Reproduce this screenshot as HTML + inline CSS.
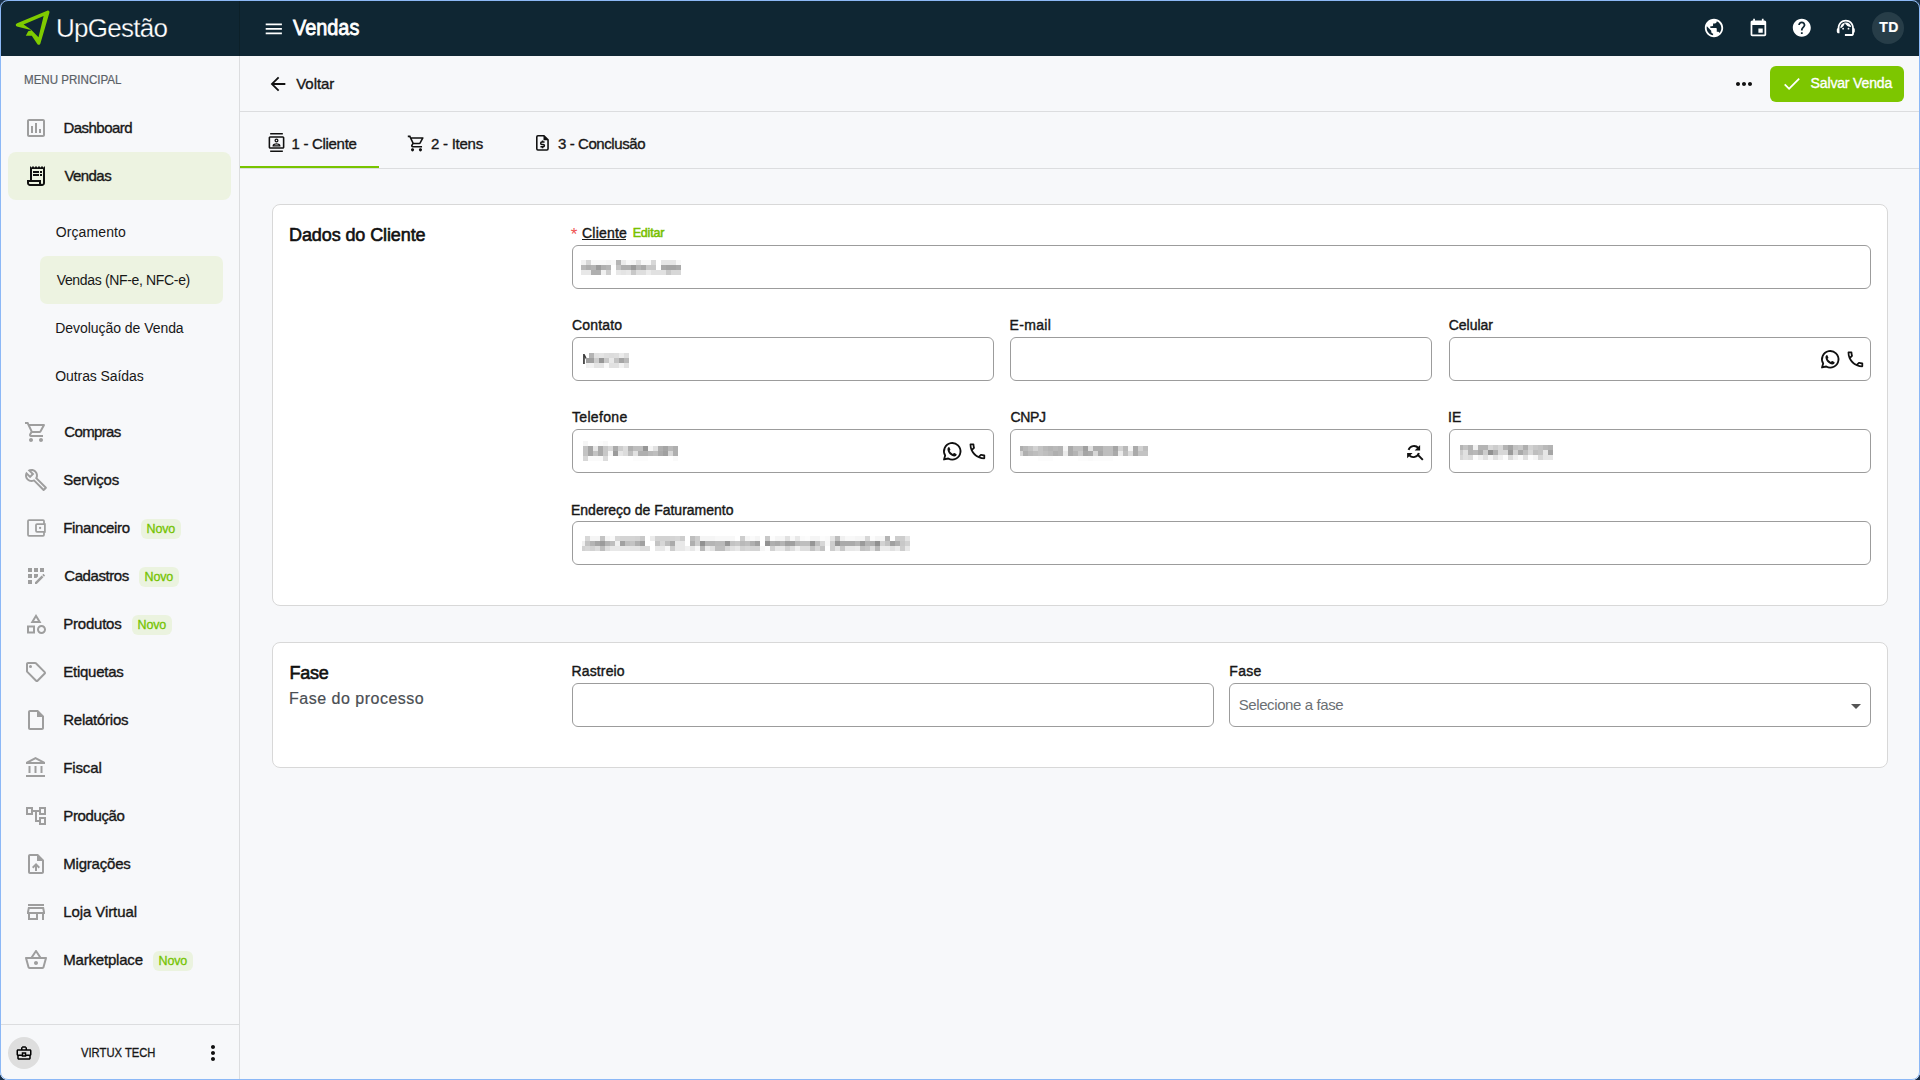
<!DOCTYPE html>
<html><head><meta charset="utf-8"><title>UpGestão - Vendas</title>
<style>
html,body{margin:0;padding:0;width:1920px;height:1080px;overflow:hidden;background:#18304a;}
#frame{position:absolute;left:0;top:0;width:1920px;height:1080px;border-radius:8px;overflow:hidden;background:#f7f8fa;}
#border{position:absolute;left:0;top:0;width:1918px;height:1078px;border:1px solid #8cb8f6;border-radius:8px;pointer-events:none;z-index:10}
.a{position:absolute;}
.t{position:absolute;white-space:nowrap;font-family:"Liberation Sans",sans-serif;}
.card{background:#fff;border:1px solid #d8d8d8;border-radius:8px;box-sizing:border-box;}
.inp{background:#fff;border:1px solid #9c9c9c;border-radius:6px;box-sizing:border-box;}
</style></head><body>
<div id="frame">
<div class="a" id="hdr" style="left:0;top:0;width:1920px;height:56px;background:#0f2633"></div>
<svg class="a" style="left:0;top:0" width="60" height="56" viewBox="0 0 60 56"><path fill-rule="evenodd" fill="#7fcb00" d="M16.9 26.5 C15.3 25.7 15.4 23.9 17.1 23.3 L47.2 10.7 C48.7 10.1 49.8 11.2 49.4 12.7 L40.4 43.6 C40 45.1 38.1 45.3 37.3 44 L31.8 35.8 L25.8 35.8 L28.2 31.3 L30.8 30.1 Z M23.6 24.4 L43.6 16 L38.5 37.2 L30.9 29.5 Z"/><path d="M25.2 31.1 L31.2 30.1" stroke="#0f2633" stroke-width="0.7"/></svg>
<div class="t" style="left:56.1px;top:14.60px;font-size:26px;line-height:26px;color:#ffffff;font-weight:normal;letter-spacing:-0.76px;-webkit-text-stroke:0.25px #0f2633;">UpGestão</div>
<div class="a" style="left:239px;top:0;width:1px;height:56px;background:#0c2029"></div>
<svg class="a" style="left:263.3px;top:17.6px" width="21.6" height="21.6" viewBox="0 0 24 24" fill="#fff"><path d="M3 18h18v-2H3v2zm0-5h18v-2H3v2zm0-7v2h18V6H3z"/></svg>
<div class="t" style="left:292.5px;top:18.12px;font-size:21.5px;line-height:21.5px;color:#ffffff;font-weight:normal;letter-spacing:0px;-webkit-text-stroke:0.8px #fff;transform:scaleX(0.925);transform-origin:0 0;">Vendas</div>
<svg class="a" style="left:1703px;top:17px" width="22" height="22" viewBox="0 0 24 24" fill="#fff"><path d="M12 2C6.48 2 2 6.48 2 12s4.48 10 10 10 10-4.48 10-10S17.52 2 12 2zm-1 17.93c-3.95-.49-7-3.85-7-7.93 0-.62.08-1.21.21-1.79L9 15v1c0 1.1.9 2 2 2v1.930zm6.9-2.54c-.26-.81-1-1.39-1.9-1.39h-1v-3c0-.55-.45-1-1-1H8v-2h2c.55 0 1-.45 1-1V7h2c1.1 0 2-.9 2-2v-.41c2.93 1.19 5 4.06 5 7.41 0 2.08-.8 3.97-2.1 5.39z"/></svg>
<svg class="a" style="left:1747.6px;top:18.2px" width="20.8" height="20.8" viewBox="0 0 24 24" fill="#fff"><path d="M17 12h-5v5h5v-5zM16 1v2H8V1H6v2H5c-1.11 0-1.99.9-1.99 2L3 19c0 1.1.89 2 2 2h14c1.1 0 2-.9 2-2V5c0-1.1-.9-2-2-2h-1V1h-2zm3 18H5V8h14v11z"/></svg>
<svg class="a" style="left:1791.3px;top:17.2px" width="21.6" height="21.6" viewBox="0 0 24 24" fill="#fff"><path d="M12 2C6.48 2 2 6.48 2 12s4.48 10 10 10 10-4.48 10-10S17.52 2 12 2zm1 17h-2v-2h2v2zm2.07-7.75l-.9.92C13.45 12.9 13 13.5 13 15h-2v-.5c0-1.1.45-2.1 1.17-2.830l1.24-1.26c.37-.36.59-.86.59-1.41 0-1.1-.9-2-2-2s-2 .9-2 2H8c0-2.21 1.79-4 4-4s4 1.79 4 4c0 .88-.36 1.68-.93 2.25z"/></svg>
<svg class="a" style="left:1835.2px;top:17.2px" width="21.6" height="21.6" viewBox="0 0 24 24" fill="#fff"><path d="M21 12.22C21 6.73 16.74 3 12 3c-4.690 0-9 3.65-9 9.28-.6.34-1 .98-1 1.72v2c0 1.1.9 2 2 2h1v-6.1c0-3.87 3.13-7 7-7s7 3.13 7 7V19h-8v2h8c1.1 0 2-.9 2-2v-1.22c.59-.31 1-.92 1-1.62v-2.3c0-.7-.41-1.31-1-1.64z"/><circle cx="9" cy="13" r="1"/><circle cx="15" cy="13" r="1"/><path d="M18 11.03C17.52 8.18 15.04 6 12.05 6c-3.03 0-6.29 2.51-6.03 6.45 2.47-1.01 4.33-3.21 4.86-5.89 1.31 2.63 4 4.44 7.12 4.47z"/></svg>
<div class="a" style="left:1872px;top:12px;width:32px;height:32px;border-radius:50%;background:#273d48"></div>
<div class="t" style="left:1879.2px;top:20.30px;font-size:14px;line-height:14px;color:#ffffff;font-weight:bold;letter-spacing:0.4px;-webkit-text-stroke:0.2px #fff;">TD</div>
<div class="a" style="left:0;top:56px;width:239px;height:1024px;background:#f7f8fa"></div>
<div class="a" style="left:239px;top:56px;width:1px;height:1024px;background:#dcdddf"></div>
<div class="t" style="left:24.0px;top:73.58px;font-size:12.5px;line-height:12.5px;color:#5a6066;font-weight:normal;letter-spacing:0px;-webkit-text-stroke:0.2px #5a6066;transform:scaleX(0.925);transform-origin:0 0;">MENU PRINCIPAL</div>
<div class="a" style="left:8px;top:152px;width:223px;height:48px;border-radius:8px;background:#edf3e1"></div>
<div class="a" style="left:40px;top:256px;width:183px;height:48px;border-radius:7px;background:#edf3e1"></div>
<svg class="a" style="left:24px;top:116px" width="24" height="24" viewBox="0 0 24 24" fill="#9e9e9e" color="#9e9e9e"><path d="M9 17H7v-7h2v7zm4 0h-2V7h2v10zm4 0h-2v-4h2v4zm2 2H5V5h14v14zm0-16H5c-1.1 0-2 .9-2 2v14c0 1.1.9 2 2 2h14c1.1 0 2-.9 2-2V5c0-1.1-.9-2-2-2z"/></svg>
<div class="t" style="left:63.4px;top:120.25px;font-size:15px;line-height:15px;color:#171717;font-weight:normal;letter-spacing:-0.52px;-webkit-text-stroke:0.35px #171717;">Dashboard</div>
<svg class="a" style="left:24px;top:164px" width="24" height="24" viewBox="0 0 24 24" fill="#111" color="#111"><path d="M19.5 3.5 18 2l-1.5 1.5L15 2l-1.5 1.5L12 2l-1.5 1.5L9 2 7.5 3.5 6 2v14H3v3c0 1.66 1.34 3 3 3h12c1.66 0 3-1.34 3-3V2l-1.5 1.5zM15 20H6c-.55 0-1-.45-1-1v-1h10v2zm4-1c0 .55-.45 1-1 1s-1-.45-1-1v-3H8V5h11v14z"/><path d="M9 7h6v2H9zM16 7h2v2h-2zM9 10h6v2H9zM16 10h2v2h-2z"/></svg>
<div class="t" style="left:64.4px;top:168.25px;font-size:15px;line-height:15px;color:#171717;font-weight:normal;letter-spacing:-0.56px;-webkit-text-stroke:0.35px #171717;">Vendas</div>
<svg class="a" style="left:24px;top:420px" width="24" height="24" viewBox="0 0 24 24" fill="#9e9e9e" color="#9e9e9e"><path d="M15.55 13c.75 0 1.41-.41 1.75-1.03l3.58-6.49c.37-.66-.11-1.48-.87-1.48H5.21l-.94-2H1v2h2l3.6 7.59-1.35 2.44C4.52 15.37 5.48 17 7 17h12v-2H7l1.1-2h7.45zM6.16 6h12.15l-2.76 5H8.53L6.16 6zM7 18c-1.1 0-1.99.9-1.99 2S5.9 22 7 22s2-.9 2-2-.9-2-2-2zm10 0c-1.1 0-1.99.9-1.99 2s.89 2 1.99 2 2-.9 2-2-.9-2-2-2z"/></svg>
<div class="t" style="left:64.3px;top:424.25px;font-size:15px;line-height:15px;color:#171717;font-weight:normal;letter-spacing:-0.65px;-webkit-text-stroke:0.35px #171717;">Compras</div>
<svg class="a" style="left:24px;top:468px" width="24" height="24" viewBox="0 0 24 24" fill="#9e9e9e" color="#9e9e9e"><path d="M22.61 18.99l-9.08-9.08c.93-2.34.45-5.1-1.44-7C9.79.61 6.21.4 3.66 2.26L7.5 6.11 6.08 7.52 2.25 3.69C.39 6.23.6 9.82 2.9 12.11c1.86 1.86 4.57 2.35 6.89 1.48l9.11 9.11c.39.39 1.02.39 1.41 0l2.3-2.3c.4-.38.4-1.01 0-1.41zm-3 1.6l-9.46-9.46c-.61.45-1.29.72-2 .82-1.36.2-2.79-.21-3.83-1.25C3.37 9.76 2.93 8.5 3 7.26l3.09 3.09 4.24-4.24-3.09-3.09c1.24-.07 2.49.37 3.44 1.31 1.08 1.08 1.49 2.57 1.24 3.96-.12.71-.42 1.37-.88 1.96l9.45 9.45-.88.89z"/></svg>
<div class="t" style="left:63.3px;top:472.25px;font-size:15px;line-height:15px;color:#171717;font-weight:normal;letter-spacing:-0.24px;-webkit-text-stroke:0.35px #171717;">Serviços</div>
<svg class="a" style="left:24px;top:516px" width="24" height="24" viewBox="0 0 24 24" fill="#9e9e9e" color="#9e9e9e"><g fill="none" stroke="currentColor" stroke-width="1.75"><path d="M20 8V5a1 1 0 0 0-1-1H5a1 1 0 0 0-1 1v13.8a1 1 0 0 0 1 1h14a1 1 0 0 0 1-1v-3"/><path d="M20.9 8H13a1 1 0 0 0-1 1v5.8a1 1 0 0 0 1 1h7.9z"/></g><circle cx="16.1" cy="12" r="1.15"/></svg>
<div class="t" style="left:63.3px;top:520.25px;font-size:15px;line-height:15px;color:#171717;font-weight:normal;letter-spacing:-0.37px;-webkit-text-stroke:0.35px #171717;">Financeiro</div>
<div class="a" style="left:141px;top:519px;width:40px;height:20px;border-radius:6px;background:#ebf3df"></div>
<div class="t" style="left:146.6px;top:523.38px;font-size:12.5px;line-height:12.5px;color:#74c300;font-weight:normal;letter-spacing:-0.15px;-webkit-text-stroke:0.3px #74c300;">Novo</div>
<svg class="a" style="left:24px;top:564px" width="24" height="24" viewBox="0 0 24 24" fill="#9e9e9e" color="#9e9e9e"><path d="M10 4h4v4h-4zM4 16h4v4H4zM4 10h4v4H4zM4 4h4v4H4zM14 12.42V10h-4v4h2.42zM20.88 11.29l-1.17-1.17c-.16-.16-.42-.16-.58 0l-.88.88L20 12.75l.88-.88c.16-.16.16-.42 0-.58zM11 18.25V20h1.75l6.67-6.67-1.75-1.75zM16 4h4v4h-4z"/></svg>
<div class="t" style="left:64.3px;top:568.25px;font-size:15px;line-height:15px;color:#171717;font-weight:normal;letter-spacing:-0.44px;-webkit-text-stroke:0.35px #171717;">Cadastros</div>
<div class="a" style="left:139px;top:567px;width:40px;height:20px;border-radius:6px;background:#ebf3df"></div>
<div class="t" style="left:144.6px;top:571.38px;font-size:12.5px;line-height:12.5px;color:#74c300;font-weight:normal;letter-spacing:-0.15px;-webkit-text-stroke:0.3px #74c300;">Novo</div>
<svg class="a" style="left:24px;top:612px" width="24" height="24" viewBox="0 0 24 24" fill="#9e9e9e" color="#9e9e9e"><path d="M12 2l-5.5 9h11L12 2zm0 3.84L13.93 9h-3.87L12 5.84zM17.5 13c-2.49 0-4.5 2.01-4.5 4.5s2.01 4.5 4.5 4.5 4.5-2.01 4.5-4.5-2.01-4.5-4.5-4.5zm0 7c-1.38 0-2.5-1.12-2.5-2.5s1.12-2.5 2.5-2.5 2.5 1.12 2.5 2.5-1.12 2.5-2.5 2.5zM3 21.5h8v-8H3v8zm2-6h4v4H5v-4z"/></svg>
<div class="t" style="left:63.3px;top:616.25px;font-size:15px;line-height:15px;color:#171717;font-weight:normal;letter-spacing:-0.23px;-webkit-text-stroke:0.35px #171717;">Produtos</div>
<div class="a" style="left:132px;top:615px;width:40px;height:20px;border-radius:6px;background:#ebf3df"></div>
<div class="t" style="left:137.6px;top:619.38px;font-size:12.5px;line-height:12.5px;color:#74c300;font-weight:normal;letter-spacing:-0.15px;-webkit-text-stroke:0.3px #74c300;">Novo</div>
<svg class="a" style="left:24px;top:660px" width="24" height="24" viewBox="0 0 24 24" fill="#9e9e9e" color="#9e9e9e"><path d="M21.41 11.41l-8.83-8.83c-.37-.37-.88-.58-1.41-.58H4c-1.1 0-2 .9-2 2v7.17c0 .53.21 1.04.59 1.41l8.83 8.83c.78.78 2.05.78 2.83 0l7.17-7.17c.78-.78.78-2.04-.01-2.83zM12.83 20L4 11.17V4h7.17L20 12.83 12.83 20z"/><circle cx="6.5" cy="6.5" r="1.5"/></svg>
<div class="t" style="left:63.3px;top:664.25px;font-size:15px;line-height:15px;color:#171717;font-weight:normal;letter-spacing:-0.26px;-webkit-text-stroke:0.35px #171717;">Etiquetas</div>
<svg class="a" style="left:24px;top:708px" width="24" height="24" viewBox="0 0 24 24" fill="#9e9e9e" color="#9e9e9e"><path d="M14 2H6c-1.1 0-1.99.9-1.99 2L4 20c0 1.1.89 2 1.99 2H18c1.1 0 2-.9 2-2V8l-6-6zM6 20V4h7v5h5v11H6z"/></svg>
<div class="t" style="left:63.3px;top:712.25px;font-size:15px;line-height:15px;color:#171717;font-weight:normal;letter-spacing:-0.26px;-webkit-text-stroke:0.35px #171717;">Relatórios</div>
<svg class="a" style="left:24px;top:756px" width="24" height="24" viewBox="0 0 24 24" fill="#9e9e9e" color="#9e9e9e"><path d="M6.5 10h-2v7h2v-7zm6 0h-2v7h2v-7zm8.5 9H2v2h19v-2zm-2.5-9h-2v7h2v-7zm-7-6.74L16.71 6H6.29l5.21-2.74m0-2.26L2 6v2h19V6l-9.5-5z"/></svg>
<div class="t" style="left:63.3px;top:760.25px;font-size:15px;line-height:15px;color:#171717;font-weight:normal;letter-spacing:-0.14px;-webkit-text-stroke:0.35px #171717;">Fiscal</div>
<svg class="a" style="left:24px;top:804px" width="24" height="24" viewBox="0 0 24 24" fill="#9e9e9e" color="#9e9e9e"><path d="M22 11V3h-7v3H9V3H2v8h7V8h2v10h4v3h7v-8h-7v3h-2V8h2v3h7zM7 9H4V5h3v4zm10 6h3v4h-3v-4zm0-10h3v4h-3V5z"/></svg>
<div class="t" style="left:63.3px;top:808.25px;font-size:15px;line-height:15px;color:#171717;font-weight:normal;letter-spacing:-0.37px;-webkit-text-stroke:0.35px #171717;">Produção</div>
<svg class="a" style="left:24px;top:852px" width="24" height="24" viewBox="0 0 24 24" fill="#9e9e9e" color="#9e9e9e"><path d="M14 2H6c-1.1 0-1.99.9-1.99 2L4 20c0 1.1.89 2 1.99 2H18c1.1 0 2-.9 2-2V8l-6-6zm4 18H6V4h7v5h5v11zM8 15.01l1.41 1.41L11 14.84V19h2v-4.16l1.59 1.59L16 15.01 12.01 11 8 15.01z"/></svg>
<div class="t" style="left:63.3px;top:856.25px;font-size:15px;line-height:15px;color:#171717;font-weight:normal;letter-spacing:-0.21px;-webkit-text-stroke:0.35px #171717;">Migrações</div>
<svg class="a" style="left:24px;top:900px" width="24" height="24" viewBox="0 0 24 24" fill="#9e9e9e" color="#9e9e9e"><path d="M18.36 9l.6 3H5.04l.6-3h12.72M20 4H4v2h16V4zm0 3H4l-1 5v2h1v6h10v-6h4v6h2v-6h1v-2l-1-5zM6 18v-4h6v4H6z"/></svg>
<div class="t" style="left:63.3px;top:904.25px;font-size:15px;line-height:15px;color:#171717;font-weight:normal;letter-spacing:-0.1px;-webkit-text-stroke:0.35px #171717;">Loja Virtual</div>
<svg class="a" style="left:24px;top:948px" width="24" height="24" viewBox="0 0 24 24" fill="#9e9e9e" color="#9e9e9e"><path d="M22 9h-4.79l-4.38-6.56c-.19-.28-.51-.42-.83-.42s-.64.14-.83.43L6.79 9H2c-.55 0-1 .45-1 1 0 .09.01.18.04.27l2.54 9.27c.23.84 1 1.46 1.92 1.46h13c.92 0 1.69-.62 1.93-1.46l2.54-9.27L23 10c0-.55-.45-1-1-1zM12 4.8L14.8 9H9.2L12 4.8zM18.5 19l-12.99.01L3.31 11H20.7l-2.2 8zM12 13c-1.1 0-2 .9-2 2s.9 2 2 2 2-.9 2-2-.9-2-2-2z"/></svg>
<div class="t" style="left:63.3px;top:952.25px;font-size:15px;line-height:15px;color:#171717;font-weight:normal;letter-spacing:-0.2px;-webkit-text-stroke:0.35px #171717;">Marketplace</div>
<div class="a" style="left:153px;top:951px;width:40px;height:20px;border-radius:6px;background:#ebf3df"></div>
<div class="t" style="left:158.6px;top:955.38px;font-size:12.5px;line-height:12.5px;color:#74c300;font-weight:normal;letter-spacing:-0.15px;-webkit-text-stroke:0.3px #74c300;">Novo</div>
<div class="t" style="left:55.7px;top:225.10px;font-size:14px;line-height:14px;color:#171717;font-weight:normal;letter-spacing:0.11px;">Orçamento</div>
<div class="t" style="left:56.7px;top:273.10px;font-size:14px;line-height:14px;color:#171717;font-weight:normal;letter-spacing:-0.34px;">Vendas (NF-e, NFC-e)</div>
<div class="t" style="left:55.3px;top:321.10px;font-size:14px;line-height:14px;color:#171717;font-weight:normal;letter-spacing:-0.05px;">Devolução de Venda</div>
<div class="t" style="left:55.3px;top:369.10px;font-size:14px;line-height:14px;color:#171717;font-weight:normal;letter-spacing:-0.09px;">Outras Saídas</div>
<div class="a" style="left:1px;top:1024px;width:238px;height:1px;background:#dcdddf"></div>
<div class="a" style="left:8px;top:1037px;width:32px;height:32px;border-radius:50%;background:#dedede"></div>
<svg class="a" style="left:15px;top:1044px" width="18" height="18" viewBox="0 0 24 24" fill="#000"><path d="M20 7h-4V5l-2-2h-4L8 5v2H4c-1.1 0-2 .9-2 2v5c0 .75.4 1.38 1 1.73V19c0 1.11.89 2 2 2h14c1.11 0 2-.89 2-2v-3.28c.59-.35 1-.99 1-1.72V9c0-1.1-.9-2-2-2zM10 5h4v2h-4V5zM4 9h16v5h-5v-3H9v3H4V9zm9 6h-2v-2h2v2zm6 4H5v-3h4v1h6v-1h4v3z"/></svg>
<div class="t" style="left:80.8px;top:1046.25px;font-size:13px;line-height:13px;color:#171717;font-weight:normal;letter-spacing:0px;-webkit-text-stroke:0.3px #171717;transform:scaleX(0.864);transform-origin:0 0;">VIRTUX TECH</div>
<svg class="a" style="left:201px;top:1041px" width="24" height="24" viewBox="0 0 24 24" fill="#111"><path d="M12 8c1.1 0 2-.9 2-2s-.9-2-2-2-2 .9-2 2 .9 2 2 2zm0 2c-1.1 0-2 .9-2 2s.9 2 2 2 2-.9 2-2-.9-2-2-2zm0 6c-1.1 0-2 .9-2 2s.9 2 2 2 2-.9 2-2-.9-2-2-2z"/></svg>
<div class="a" style="left:240px;top:56px;width:1680px;height:1024px;background:#f7f8fa"></div>
<svg class="a" style="left:267px;top:73px" width="22" height="22" viewBox="0 0 24 24" fill="#111"><path d="M20 11H7.830l5.59-5.59L12 4l-8 8 8 8 1.41-1.41L7.83 13H20v-2z"/></svg>
<div class="t" style="left:296.2px;top:76.15px;font-size:15px;line-height:15px;color:#171717;font-weight:normal;letter-spacing:-0.04px;-webkit-text-stroke:0.35px #171717;">Voltar</div>
<svg class="a" style="left:1732px;top:72px" width="24" height="24" viewBox="0 0 24 24" fill="#111"><path d="M6 10c-1.1 0-2 .9-2 2s.9 2 2 2 2-.9 2-2-.9-2-2-2zm12 0c-1.1 0-2 .9-2 2s.9 2 2 2 2-.9 2-2-.9-2-2-2zm-6 0c-1.1 0-2 .9-2 2s.9 2 2 2 2-.9 2-2-.9-2-2-2z"/></svg>
<div class="a" style="left:1770px;top:66px;width:134px;height:36px;border-radius:6px;background:#7dc600"></div>
<svg class="a" style="left:1781.3px;top:72.6px" width="21.5" height="21.5" viewBox="0 0 24 24" fill="#fff"><path d="M9 16.17L4.83 12l-1.42 1.41L9 19 21 7l-1.41-1.41z"/></svg>
<div class="t" style="left:1810.6px;top:76.30px;font-size:14px;line-height:14px;color:#fff;font-weight:normal;letter-spacing:-0.15px;-webkit-text-stroke:0.35px #fff;">Salvar Venda</div>
<div class="a" style="left:240px;top:111px;width:1680px;height:1px;background:#dcdddf"></div>
<div class="a" style="left:240px;top:168px;width:1680px;height:1px;background:#dcdddf"></div>
<div class="a" style="left:240px;top:166px;width:139px;height:2px;background:#78c400"></div>
<svg class="a" style="left:266.5px;top:133.3px" width="19" height="19" viewBox="0 0 24 24" fill="#111"><path d="M20 0H4v2h16V0zM4 24h16v-2H4v2zM20 4H4c-1.1 0-2 .9-2 2v12c0 1.1.9 2 2 2h16c1.1 0 2-.9 2-2V6c0-1.1-.9-2-2-2zm0 14H4V6h16v12zm-8-6c1.38 0 2.5-1.12 2.5-2.5S13.38 7 12 7 9.5 8.12 9.5 9.5 10.62 12 12 12zm0-3.5c.55 0 1 .45 1 1s-.45 1-1 1-1-.45-1-1 .45-1 1-1zm5 7.49C17 13.9 13.69 13 12 13s-5 .9-5 2.99V17h10v-1.01zm-8.19-.49c.61-.52 2.03-1 3.19-1 1.17 0 2.59.48 3.2 1H8.81z"/></svg>
<div class="t" style="left:291.5px;top:135.65px;font-size:15px;line-height:15px;color:#171717;font-weight:normal;letter-spacing:-0.3px;-webkit-text-stroke:0.35px #171717;">1 - Cliente</div>
<svg class="a" style="left:406.6px;top:134.3px" width="19" height="19" viewBox="0 0 24 24" fill="#111"><path d="M15.55 13c.75 0 1.41-.41 1.75-1.03l3.58-6.49c.37-.66-.11-1.48-.87-1.48H5.21l-.94-2H1v2h2l3.6 7.59-1.35 2.44C4.52 15.37 5.48 17 7 17h12v-2H7l1.1-2h7.45zM6.16 6h12.15l-2.76 5H8.53L6.16 6zM7 18c-1.1 0-1.99.9-1.99 2S5.9 22 7 22s2-.9 2-2-.9-2-2-2zm10 0c-1.1 0-1.99.9-1.99 2s.89 2 1.99 2 2-.9 2-2-.9-2-2-2z"/></svg>
<div class="t" style="left:431.0px;top:135.65px;font-size:15px;line-height:15px;color:#171717;font-weight:normal;letter-spacing:-0.25px;-webkit-text-stroke:0.35px #171717;">2 - Itens</div>
<svg class="a" style="left:532.5px;top:133.3px" width="19" height="19" viewBox="0 0 24 24" fill="#111" color="#111"><path d="M6.2 3.5h7.6l5.2 5.2v11.3c0 .8-.6 1.4-1.4 1.4H6.2c-.8 0-1.4-.6-1.4-1.4V4.9c0-.8.6-1.4 1.4-1.4z" fill="none" stroke="currentColor" stroke-width="2"/><path d="M13.3 3.3v5.9h5.9z"/><path d="M14.6 11.4h-3.4c-.8 0-1.5.6-1.5 1.5s.7 1.5 1.5 1.5h1.7c.8 0 1.5.7 1.5 1.5s-.7 1.5-1.5 1.5H9.4" fill="none" stroke="currentColor" stroke-width="1.9"/><path d="M11.1 9.6h1.9v1.8h-1.9zM11.1 17.4h1.9v1.8h-1.9z"/></svg>
<div class="t" style="left:558.0px;top:135.65px;font-size:15px;line-height:15px;color:#171717;font-weight:normal;letter-spacing:-0.42px;-webkit-text-stroke:0.35px #171717;">3 - Conclusão</div>
<div class="a card" style="left:272px;top:204px;width:1616px;height:402px"></div>
<div class="t" style="left:289.0px;top:225.70px;font-size:18px;line-height:18px;color:#111;font-weight:normal;letter-spacing:-0.1px;-webkit-text-stroke:0.6px #111;">Dados do Cliente</div>
<div class="t" style="left:570.8px;top:226.35px;font-size:17px;line-height:17px;color:#ef5350;font-weight:normal;letter-spacing:0px;">*</div>
<div class="t" style="left:582.0px;top:226.30px;font-size:14px;line-height:14px;color:#171717;font-weight:normal;letter-spacing:0.22px;-webkit-text-stroke:0.4px #171717;">Cliente</div>
<div class="a" style="left:582px;top:239px;width:43.5px;height:1.3px;background:#171717"></div>
<div class="t" style="left:632.7px;top:227.38px;font-size:12.5px;line-height:12.5px;color:#78c000;font-weight:normal;letter-spacing:-0.2px;-webkit-text-stroke:0.55px #78c000;">Editar</div>
<div class="a inp" style="left:572px;top:245px;width:1299px;height:44px"></div>
<svg class="a" style="left:581px;top:260px" width="100" height="15" shape-rendering="crispEdges"><rect x="0" y="0" width="5" height="5" fill="rgb(242,242,242)"/><rect x="5" y="0" width="5" height="5" fill="rgb(215,215,215)"/><rect x="10" y="0" width="5" height="5" fill="rgb(248,248,248)"/><rect x="15" y="0" width="5" height="5" fill="rgb(248,248,248)"/><rect x="20" y="0" width="5" height="5" fill="rgb(248,248,248)"/><rect x="25" y="0" width="5" height="5" fill="rgb(245,245,245)"/><rect x="30" y="0" width="5" height="5" fill="rgb(248,248,248)"/><rect x="35" y="0" width="5" height="5" fill="rgb(180,180,180)"/><rect x="40" y="0" width="5" height="5" fill="rgb(235,235,235)"/><rect x="45" y="0" width="5" height="5" fill="rgb(248,248,248)"/><rect x="50" y="0" width="5" height="5" fill="rgb(245,245,245)"/><rect x="55" y="0" width="5" height="5" fill="rgb(225,225,225)"/><rect x="60" y="0" width="5" height="5" fill="rgb(248,248,248)"/><rect x="65" y="0" width="5" height="5" fill="rgb(248,248,248)"/><rect x="70" y="0" width="5" height="5" fill="rgb(215,215,215)"/><rect x="80" y="0" width="5" height="5" fill="rgb(230,230,230)"/><rect x="85" y="0" width="5" height="5" fill="rgb(230,230,230)"/><rect x="90" y="0" width="5" height="5" fill="rgb(230,230,230)"/><rect x="95" y="0" width="5" height="5" fill="rgb(248,248,248)"/><rect x="0" y="5" width="5" height="5" fill="rgb(185,185,185)"/><rect x="5" y="5" width="5" height="5" fill="rgb(175,175,175)"/><rect x="10" y="5" width="5" height="5" fill="rgb(180,180,180)"/><rect x="15" y="5" width="5" height="5" fill="rgb(155,155,155)"/><rect x="20" y="5" width="5" height="5" fill="rgb(175,175,175)"/><rect x="25" y="5" width="5" height="5" fill="rgb(180,180,180)"/><rect x="35" y="5" width="5" height="5" fill="rgb(195,195,195)"/><rect x="40" y="5" width="5" height="5" fill="rgb(175,175,175)"/><rect x="45" y="5" width="5" height="5" fill="rgb(175,175,175)"/><rect x="50" y="5" width="5" height="5" fill="rgb(155,155,155)"/><rect x="55" y="5" width="5" height="5" fill="rgb(180,180,180)"/><rect x="60" y="5" width="5" height="5" fill="rgb(170,170,170)"/><rect x="65" y="5" width="5" height="5" fill="rgb(200,200,200)"/><rect x="70" y="5" width="5" height="5" fill="rgb(200,200,200)"/><rect x="80" y="5" width="5" height="5" fill="rgb(170,170,170)"/><rect x="85" y="5" width="5" height="5" fill="rgb(165,165,165)"/><rect x="90" y="5" width="5" height="5" fill="rgb(165,165,165)"/><rect x="95" y="5" width="5" height="5" fill="rgb(170,170,170)"/><rect x="0" y="10" width="5" height="5" fill="rgb(232,232,232)"/><rect x="5" y="10" width="5" height="5" fill="rgb(232,232,232)"/><rect x="10" y="10" width="5" height="5" fill="rgb(175,175,175)"/><rect x="15" y="10" width="5" height="5" fill="rgb(175,175,175)"/><rect x="20" y="10" width="5" height="5" fill="rgb(240,240,240)"/><rect x="25" y="10" width="5" height="5" fill="rgb(205,205,205)"/><rect x="35" y="10" width="5" height="5" fill="rgb(232,232,232)"/><rect x="40" y="10" width="5" height="5" fill="rgb(228,228,228)"/><rect x="45" y="10" width="5" height="5" fill="rgb(232,232,232)"/><rect x="50" y="10" width="5" height="5" fill="rgb(200,200,200)"/><rect x="55" y="10" width="5" height="5" fill="rgb(222,222,222)"/><rect x="60" y="10" width="5" height="5" fill="rgb(222,222,222)"/><rect x="65" y="10" width="5" height="5" fill="rgb(235,235,235)"/><rect x="70" y="10" width="5" height="5" fill="rgb(225,225,225)"/><rect x="75" y="10" width="5" height="5" fill="rgb(225,225,225)"/><rect x="80" y="10" width="5" height="5" fill="rgb(225,225,225)"/><rect x="85" y="10" width="5" height="5" fill="rgb(200,200,200)"/><rect x="90" y="10" width="5" height="5" fill="rgb(215,215,215)"/><rect x="95" y="10" width="5" height="5" fill="rgb(215,215,215)"/></svg>
<div class="t" style="left:572.0px;top:318.30px;font-size:14px;line-height:14px;color:#171717;font-weight:normal;letter-spacing:0.17px;-webkit-text-stroke:0.4px #171717;">Contato</div>
<div class="a inp" style="left:572px;top:337px;width:422px;height:44px"></div>
<div class="t" style="left:1009.5px;top:318.30px;font-size:14px;line-height:14px;color:#171717;font-weight:normal;letter-spacing:0.35px;-webkit-text-stroke:0.4px #171717;">E-mail</div>
<div class="a inp" style="left:1010px;top:337px;width:422px;height:44px"></div>
<div class="t" style="left:1448.8px;top:318.30px;font-size:14px;line-height:14px;color:#171717;font-weight:normal;letter-spacing:-0.04px;-webkit-text-stroke:0.4px #171717;">Celular</div>
<div class="a inp" style="left:1449px;top:337px;width:422px;height:44px"></div>
<div class="t" style="left:572.0px;top:410.30px;font-size:14px;line-height:14px;color:#171717;font-weight:normal;letter-spacing:0.32px;-webkit-text-stroke:0.4px #171717;">Telefone</div>
<div class="a inp" style="left:572px;top:429px;width:422px;height:44px"></div>
<div class="t" style="left:1010.5px;top:410.30px;font-size:14px;line-height:14px;color:#171717;font-weight:normal;letter-spacing:-0.33px;-webkit-text-stroke:0.4px #171717;">CNPJ</div>
<div class="a inp" style="left:1010px;top:429px;width:422px;height:44px"></div>
<div class="t" style="left:1448.0px;top:410.30px;font-size:14px;line-height:14px;color:#171717;font-weight:normal;letter-spacing:0px;-webkit-text-stroke:0.4px #171717;">IE</div>
<div class="a inp" style="left:1449px;top:429px;width:422px;height:44px"></div>
<div class="t" style="left:571.0px;top:502.70px;font-size:14px;line-height:14px;color:#171717;font-weight:normal;letter-spacing:-0.01px;-webkit-text-stroke:0.4px #171717;">Endereço de Faturamento</div>
<div class="a inp" style="left:572px;top:521px;width:1299px;height:44px"></div>
<svg class="a" style="left:580px;top:350px" width="10" height="18"><path d="M3.1 4h1.7v10H3.1z M3.4 4 L4.6 4 L6.8 8.6 L5.8 9.2 Z" fill="#3a3a3a"/></svg>
<svg class="a" style="left:586px;top:353px" width="43" height="15" shape-rendering="crispEdges"><rect x="3" y="0" width="5" height="5" fill="rgb(180,180,180)"/><rect x="8" y="0" width="5" height="5" fill="rgb(225,225,225)"/><rect x="13" y="0" width="5" height="5" fill="rgb(228,228,228)"/><rect x="18" y="0" width="5" height="5" fill="rgb(222,222,222)"/><rect x="23" y="0" width="5" height="5" fill="rgb(220,220,220)"/><rect x="28" y="0" width="5" height="5" fill="rgb(222,222,222)"/><rect x="33" y="0" width="5" height="5" fill="rgb(235,235,235)"/><rect x="38" y="0" width="5" height="5" fill="rgb(222,222,222)"/><rect x="0" y="5" width="3" height="5" fill="rgb(160,160,160)"/><rect x="3" y="5" width="5" height="5" fill="rgb(160,160,160)"/><rect x="8" y="5" width="5" height="5" fill="rgb(205,205,205)"/><rect x="13" y="5" width="5" height="5" fill="rgb(150,150,150)"/><rect x="18" y="5" width="5" height="5" fill="rgb(200,200,200)"/><rect x="23" y="5" width="5" height="5" fill="rgb(232,232,232)"/><rect x="28" y="5" width="5" height="5" fill="rgb(195,195,195)"/><rect x="33" y="5" width="5" height="5" fill="rgb(165,165,165)"/><rect x="38" y="5" width="5" height="5" fill="rgb(185,185,185)"/><rect x="0" y="10" width="3" height="5" fill="rgb(240,240,240)"/><rect x="3" y="10" width="5" height="5" fill="rgb(242,242,242)"/><rect x="8" y="10" width="5" height="5" fill="rgb(228,228,228)"/><rect x="13" y="10" width="5" height="5" fill="rgb(228,228,228)"/><rect x="18" y="10" width="5" height="5" fill="rgb(248,248,248)"/><rect x="23" y="10" width="5" height="5" fill="rgb(225,225,225)"/><rect x="28" y="10" width="5" height="5" fill="rgb(225,225,225)"/><rect x="33" y="10" width="5" height="5" fill="rgb(242,242,242)"/><rect x="38" y="10" width="5" height="5" fill="rgb(225,225,225)"/></svg>
<svg class="a" style="left:583px;top:441px" width="95" height="20" shape-rendering="crispEdges"><rect x="0" y="0" width="5" height="5" fill="rgb(245,245,245)"/><rect x="15" y="0" width="5" height="5" fill="rgb(252,252,252)"/><rect x="20" y="0" width="5" height="5" fill="rgb(248,248,248)"/><rect x="0" y="5" width="5" height="5" fill="rgb(195,195,195)"/><rect x="5" y="5" width="5" height="5" fill="rgb(165,165,165)"/><rect x="10" y="5" width="5" height="5" fill="rgb(230,230,230)"/><rect x="15" y="5" width="5" height="5" fill="rgb(170,170,170)"/><rect x="20" y="5" width="5" height="5" fill="rgb(200,200,200)"/><rect x="25" y="5" width="5" height="5" fill="rgb(215,215,215)"/><rect x="30" y="5" width="5" height="5" fill="rgb(170,170,170)"/><rect x="35" y="5" width="5" height="5" fill="rgb(205,205,205)"/><rect x="40" y="5" width="5" height="5" fill="rgb(220,220,220)"/><rect x="45" y="5" width="5" height="5" fill="rgb(175,175,175)"/><rect x="50" y="5" width="5" height="5" fill="rgb(190,190,190)"/><rect x="55" y="5" width="5" height="5" fill="rgb(190,190,190)"/><rect x="60" y="5" width="5" height="5" fill="rgb(150,150,150)"/><rect x="65" y="5" width="5" height="5" fill="rgb(245,245,245)"/><rect x="70" y="5" width="5" height="5" fill="rgb(225,225,225)"/><rect x="75" y="5" width="5" height="5" fill="rgb(175,175,175)"/><rect x="80" y="5" width="5" height="5" fill="rgb(165,165,165)"/><rect x="85" y="5" width="5" height="5" fill="rgb(185,185,185)"/><rect x="90" y="5" width="5" height="5" fill="rgb(175,175,175)"/><rect x="0" y="10" width="5" height="5" fill="rgb(195,195,195)"/><rect x="5" y="10" width="5" height="5" fill="rgb(165,165,165)"/><rect x="10" y="10" width="5" height="5" fill="rgb(195,195,195)"/><rect x="15" y="10" width="5" height="5" fill="rgb(170,170,170)"/><rect x="20" y="10" width="5" height="5" fill="rgb(200,200,200)"/><rect x="25" y="10" width="5" height="5" fill="rgb(245,245,245)"/><rect x="30" y="10" width="5" height="5" fill="rgb(155,155,155)"/><rect x="35" y="10" width="5" height="5" fill="rgb(230,230,230)"/><rect x="40" y="10" width="5" height="5" fill="rgb(220,220,220)"/><rect x="45" y="10" width="5" height="5" fill="rgb(190,190,190)"/><rect x="50" y="10" width="5" height="5" fill="rgb(225,225,225)"/><rect x="55" y="10" width="5" height="5" fill="rgb(175,175,175)"/><rect x="60" y="10" width="5" height="5" fill="rgb(175,175,175)"/><rect x="65" y="10" width="5" height="5" fill="rgb(185,185,185)"/><rect x="70" y="10" width="5" height="5" fill="rgb(190,190,190)"/><rect x="75" y="10" width="5" height="5" fill="rgb(170,170,170)"/><rect x="80" y="10" width="5" height="5" fill="rgb(160,160,160)"/><rect x="85" y="10" width="5" height="5" fill="rgb(215,215,215)"/><rect x="90" y="10" width="5" height="5" fill="rgb(175,175,175)"/><rect x="0" y="15" width="5" height="5" fill="rgb(215,215,215)"/><rect x="5" y="15" width="5" height="5" fill="rgb(250,250,250)"/><rect x="10" y="15" width="5" height="5" fill="rgb(250,250,250)"/><rect x="15" y="15" width="5" height="5" fill="rgb(250,250,250)"/><rect x="20" y="15" width="5" height="5" fill="rgb(220,220,220)"/><rect x="50" y="15" width="5" height="5" fill="rgb(252,252,252)"/><rect x="55" y="15" width="5" height="5" fill="rgb(252,252,252)"/><rect x="60" y="15" width="5" height="5" fill="rgb(252,252,252)"/><rect x="90" y="15" width="5" height="5" fill="rgb(250,250,250)"/></svg>
<svg class="a" style="left:1020px;top:446px" width="128" height="15" shape-rendering="crispEdges"><rect x="0" y="0" width="3" height="5" fill="rgb(175,175,175)"/><rect x="3" y="0" width="5" height="5" fill="rgb(185,185,185)"/><rect x="8" y="0" width="5" height="5" fill="rgb(195,195,195)"/><rect x="13" y="0" width="5" height="5" fill="rgb(210,210,210)"/><rect x="18" y="0" width="5" height="5" fill="rgb(195,195,195)"/><rect x="23" y="0" width="5" height="5" fill="rgb(185,185,185)"/><rect x="28" y="0" width="5" height="5" fill="rgb(180,180,180)"/><rect x="33" y="0" width="5" height="5" fill="rgb(185,185,185)"/><rect x="38" y="0" width="5" height="5" fill="rgb(180,180,180)"/><rect x="43" y="0" width="5" height="5" fill="rgb(245,245,245)"/><rect x="48" y="0" width="5" height="5" fill="rgb(170,170,170)"/><rect x="53" y="0" width="5" height="5" fill="rgb(190,190,190)"/><rect x="58" y="0" width="5" height="5" fill="rgb(190,190,190)"/><rect x="63" y="0" width="5" height="5" fill="rgb(160,160,160)"/><rect x="68" y="0" width="5" height="5" fill="rgb(225,225,225)"/><rect x="73" y="0" width="5" height="5" fill="rgb(175,175,175)"/><rect x="78" y="0" width="5" height="5" fill="rgb(175,175,175)"/><rect x="83" y="0" width="5" height="5" fill="rgb(190,190,190)"/><rect x="88" y="0" width="5" height="5" fill="rgb(190,190,190)"/><rect x="93" y="0" width="5" height="5" fill="rgb(165,165,165)"/><rect x="98" y="0" width="5" height="5" fill="rgb(210,210,210)"/><rect x="103" y="0" width="5" height="5" fill="rgb(185,185,185)"/><rect x="108" y="0" width="5" height="5" fill="rgb(245,245,245)"/><rect x="113" y="0" width="5" height="5" fill="rgb(170,170,170)"/><rect x="118" y="0" width="5" height="5" fill="rgb(210,210,210)"/><rect x="123" y="0" width="5" height="5" fill="rgb(190,190,190)"/><rect x="0" y="5" width="3" height="5" fill="rgb(215,215,215)"/><rect x="3" y="5" width="5" height="5" fill="rgb(175,175,175)"/><rect x="8" y="5" width="5" height="5" fill="rgb(185,185,185)"/><rect x="13" y="5" width="5" height="5" fill="rgb(190,190,190)"/><rect x="18" y="5" width="5" height="5" fill="rgb(195,195,195)"/><rect x="23" y="5" width="5" height="5" fill="rgb(190,190,190)"/><rect x="28" y="5" width="5" height="5" fill="rgb(185,185,185)"/><rect x="33" y="5" width="5" height="5" fill="rgb(175,175,175)"/><rect x="38" y="5" width="5" height="5" fill="rgb(180,180,180)"/><rect x="43" y="5" width="5" height="5" fill="rgb(235,235,235)"/><rect x="48" y="5" width="5" height="5" fill="rgb(170,170,170)"/><rect x="53" y="5" width="5" height="5" fill="rgb(180,180,180)"/><rect x="58" y="5" width="5" height="5" fill="rgb(200,200,200)"/><rect x="63" y="5" width="5" height="5" fill="rgb(165,165,165)"/><rect x="68" y="5" width="5" height="5" fill="rgb(170,170,170)"/><rect x="73" y="5" width="5" height="5" fill="rgb(215,215,215)"/><rect x="78" y="5" width="5" height="5" fill="rgb(170,170,170)"/><rect x="83" y="5" width="5" height="5" fill="rgb(190,190,190)"/><rect x="88" y="5" width="5" height="5" fill="rgb(190,190,190)"/><rect x="93" y="5" width="5" height="5" fill="rgb(170,170,170)"/><rect x="98" y="5" width="5" height="5" fill="rgb(235,235,235)"/><rect x="103" y="5" width="5" height="5" fill="rgb(190,190,190)"/><rect x="108" y="5" width="5" height="5" fill="rgb(220,220,220)"/><rect x="113" y="5" width="5" height="5" fill="rgb(170,170,170)"/><rect x="118" y="5" width="5" height="5" fill="rgb(195,195,195)"/><rect x="123" y="5" width="5" height="5" fill="rgb(195,195,195)"/><rect x="18" y="10" width="5" height="5" fill="rgb(252,252,252)"/><rect x="23" y="10" width="5" height="5" fill="rgb(252,252,252)"/><rect x="28" y="10" width="5" height="5" fill="rgb(252,252,252)"/><rect x="58" y="10" width="5" height="5" fill="rgb(252,252,252)"/><rect x="63" y="10" width="5" height="5" fill="rgb(252,252,252)"/><rect x="68" y="10" width="5" height="5" fill="rgb(250,250,250)"/><rect x="73" y="10" width="5" height="5" fill="rgb(252,252,252)"/><rect x="78" y="10" width="5" height="5" fill="rgb(252,252,252)"/><rect x="83" y="10" width="5" height="5" fill="rgb(252,252,252)"/><rect x="88" y="10" width="5" height="5" fill="rgb(252,252,252)"/></svg>
<svg class="a" style="left:1460px;top:445px" width="93" height="15" shape-rendering="crispEdges"><rect x="0" y="0" width="3" height="5" fill="rgb(180,180,180)"/><rect x="3" y="0" width="5" height="5" fill="rgb(195,195,195)"/><rect x="8" y="0" width="5" height="5" fill="rgb(180,180,180)"/><rect x="13" y="0" width="5" height="5" fill="rgb(240,240,240)"/><rect x="18" y="0" width="5" height="5" fill="rgb(180,180,180)"/><rect x="23" y="0" width="5" height="5" fill="rgb(180,180,180)"/><rect x="28" y="0" width="5" height="5" fill="rgb(215,215,215)"/><rect x="33" y="0" width="5" height="5" fill="rgb(205,205,205)"/><rect x="38" y="0" width="5" height="5" fill="rgb(215,215,215)"/><rect x="43" y="0" width="5" height="5" fill="rgb(180,180,180)"/><rect x="48" y="0" width="5" height="5" fill="rgb(165,165,165)"/><rect x="53" y="0" width="5" height="5" fill="rgb(195,195,195)"/><rect x="58" y="0" width="5" height="5" fill="rgb(200,200,200)"/><rect x="63" y="0" width="5" height="5" fill="rgb(175,175,175)"/><rect x="68" y="0" width="5" height="5" fill="rgb(210,210,210)"/><rect x="73" y="0" width="5" height="5" fill="rgb(200,200,200)"/><rect x="78" y="0" width="5" height="5" fill="rgb(195,195,195)"/><rect x="83" y="0" width="5" height="5" fill="rgb(185,185,185)"/><rect x="88" y="0" width="5" height="5" fill="rgb(180,180,180)"/><rect x="0" y="5" width="3" height="5" fill="rgb(205,205,205)"/><rect x="3" y="5" width="5" height="5" fill="rgb(225,225,225)"/><rect x="8" y="5" width="5" height="5" fill="rgb(180,180,180)"/><rect x="13" y="5" width="5" height="5" fill="rgb(185,185,185)"/><rect x="18" y="5" width="5" height="5" fill="rgb(170,170,170)"/><rect x="23" y="5" width="5" height="5" fill="rgb(205,205,205)"/><rect x="28" y="5" width="5" height="5" fill="rgb(145,145,145)"/><rect x="33" y="5" width="5" height="5" fill="rgb(175,175,175)"/><rect x="38" y="5" width="5" height="5" fill="rgb(215,215,215)"/><rect x="43" y="5" width="5" height="5" fill="rgb(215,215,215)"/><rect x="48" y="5" width="5" height="5" fill="rgb(155,155,155)"/><rect x="53" y="5" width="5" height="5" fill="rgb(210,210,210)"/><rect x="58" y="5" width="5" height="5" fill="rgb(170,170,170)"/><rect x="63" y="5" width="5" height="5" fill="rgb(190,190,190)"/><rect x="68" y="5" width="5" height="5" fill="rgb(215,215,215)"/><rect x="73" y="5" width="5" height="5" fill="rgb(190,190,190)"/><rect x="78" y="5" width="5" height="5" fill="rgb(195,195,195)"/><rect x="83" y="5" width="5" height="5" fill="rgb(230,230,230)"/><rect x="88" y="5" width="5" height="5" fill="rgb(165,165,165)"/><rect x="0" y="10" width="3" height="5" fill="rgb(215,215,215)"/><rect x="3" y="10" width="5" height="5" fill="rgb(225,225,225)"/><rect x="8" y="10" width="5" height="5" fill="rgb(220,220,220)"/><rect x="13" y="10" width="5" height="5" fill="rgb(252,252,252)"/><rect x="18" y="10" width="5" height="5" fill="rgb(240,240,240)"/><rect x="23" y="10" width="5" height="5" fill="rgb(225,225,225)"/><rect x="28" y="10" width="5" height="5" fill="rgb(245,245,245)"/><rect x="33" y="10" width="5" height="5" fill="rgb(225,225,225)"/><rect x="38" y="10" width="5" height="5" fill="rgb(240,240,240)"/><rect x="43" y="10" width="5" height="5" fill="rgb(252,252,252)"/><rect x="48" y="10" width="5" height="5" fill="rgb(220,220,220)"/><rect x="53" y="10" width="5" height="5" fill="rgb(240,240,240)"/><rect x="58" y="10" width="5" height="5" fill="rgb(250,250,250)"/><rect x="63" y="10" width="5" height="5" fill="rgb(225,225,225)"/><rect x="68" y="10" width="5" height="5" fill="rgb(252,252,252)"/><rect x="73" y="10" width="5" height="5" fill="rgb(245,245,245)"/><rect x="78" y="10" width="5" height="5" fill="rgb(215,215,215)"/><rect x="83" y="10" width="5" height="5" fill="rgb(230,230,230)"/><rect x="88" y="10" width="5" height="5" fill="rgb(230,230,230)"/></svg>
<svg class="a" style="left:582px;top:536px" width="328" height="15" shape-rendering="crispEdges"><rect x="3" y="0" width="5" height="5" fill="rgb(215,215,215)"/><rect x="8" y="0" width="5" height="5" fill="rgb(245,245,245)"/><rect x="13" y="0" width="5" height="5" fill="rgb(245,245,245)"/><rect x="18" y="0" width="5" height="5" fill="rgb(195,195,195)"/><rect x="23" y="0" width="5" height="5" fill="rgb(245,245,245)"/><rect x="28" y="0" width="5" height="5" fill="rgb(250,250,250)"/><rect x="33" y="0" width="5" height="5" fill="rgb(215,215,215)"/><rect x="38" y="0" width="5" height="5" fill="rgb(212,212,212)"/><rect x="43" y="0" width="5" height="5" fill="rgb(212,212,212)"/><rect x="48" y="0" width="5" height="5" fill="rgb(212,212,212)"/><rect x="53" y="0" width="5" height="5" fill="rgb(210,210,210)"/><rect x="58" y="0" width="5" height="5" fill="rgb(200,200,200)"/><rect x="68" y="0" width="5" height="5" fill="rgb(235,235,235)"/><rect x="73" y="0" width="5" height="5" fill="rgb(210,210,210)"/><rect x="78" y="0" width="5" height="5" fill="rgb(210,210,210)"/><rect x="83" y="0" width="5" height="5" fill="rgb(210,210,210)"/><rect x="88" y="0" width="5" height="5" fill="rgb(212,212,212)"/><rect x="93" y="0" width="5" height="5" fill="rgb(215,215,215)"/><rect x="98" y="0" width="5" height="5" fill="rgb(205,205,205)"/><rect x="108" y="0" width="5" height="5" fill="rgb(190,190,190)"/><rect x="113" y="0" width="5" height="5" fill="rgb(205,205,205)"/><rect x="118" y="0" width="5" height="5" fill="rgb(245,245,245)"/><rect x="123" y="0" width="5" height="5" fill="rgb(245,245,245)"/><rect x="128" y="0" width="5" height="5" fill="rgb(245,245,245)"/><rect x="133" y="0" width="5" height="5" fill="rgb(248,248,248)"/><rect x="138" y="0" width="5" height="5" fill="rgb(248,248,248)"/><rect x="143" y="0" width="5" height="5" fill="rgb(248,248,248)"/><rect x="148" y="0" width="5" height="5" fill="rgb(248,248,248)"/><rect x="158" y="0" width="5" height="5" fill="rgb(205,205,205)"/><rect x="163" y="0" width="5" height="5" fill="rgb(245,245,245)"/><rect x="168" y="0" width="5" height="5" fill="rgb(250,250,250)"/><rect x="173" y="0" width="5" height="5" fill="rgb(245,245,245)"/><rect x="183" y="0" width="5" height="5" fill="rgb(200,200,200)"/><rect x="188" y="0" width="5" height="5" fill="rgb(252,252,252)"/><rect x="193" y="0" width="5" height="5" fill="rgb(245,245,245)"/><rect x="198" y="0" width="5" height="5" fill="rgb(245,245,245)"/><rect x="203" y="0" width="5" height="5" fill="rgb(225,225,225)"/><rect x="208" y="0" width="5" height="5" fill="rgb(248,248,248)"/><rect x="213" y="0" width="5" height="5" fill="rgb(232,232,232)"/><rect x="218" y="0" width="5" height="5" fill="rgb(250,250,250)"/><rect x="223" y="0" width="5" height="5" fill="rgb(252,252,252)"/><rect x="228" y="0" width="5" height="5" fill="rgb(245,245,245)"/><rect x="233" y="0" width="5" height="5" fill="rgb(245,245,245)"/><rect x="238" y="0" width="5" height="5" fill="rgb(252,252,252)"/><rect x="243" y="0" width="5" height="5" fill="rgb(250,250,250)"/><rect x="248" y="0" width="5" height="5" fill="rgb(228,228,228)"/><rect x="253" y="0" width="5" height="5" fill="rgb(190,190,190)"/><rect x="258" y="0" width="5" height="5" fill="rgb(240,240,240)"/><rect x="263" y="0" width="5" height="5" fill="rgb(248,248,248)"/><rect x="268" y="0" width="5" height="5" fill="rgb(248,248,248)"/><rect x="273" y="0" width="5" height="5" fill="rgb(245,245,245)"/><rect x="278" y="0" width="5" height="5" fill="rgb(245,245,245)"/><rect x="283" y="0" width="5" height="5" fill="rgb(215,215,215)"/><rect x="288" y="0" width="5" height="5" fill="rgb(252,252,252)"/><rect x="293" y="0" width="5" height="5" fill="rgb(245,245,245)"/><rect x="298" y="0" width="5" height="5" fill="rgb(245,245,245)"/><rect x="303" y="0" width="5" height="5" fill="rgb(180,180,180)"/><rect x="313" y="0" width="5" height="5" fill="rgb(205,205,205)"/><rect x="318" y="0" width="5" height="5" fill="rgb(205,205,205)"/><rect x="323" y="0" width="5" height="5" fill="rgb(228,228,228)"/><rect x="0" y="5" width="3" height="5" fill="rgb(240,240,240)"/><rect x="3" y="5" width="5" height="5" fill="rgb(195,195,195)"/><rect x="8" y="5" width="5" height="5" fill="rgb(180,180,180)"/><rect x="13" y="5" width="5" height="5" fill="rgb(165,165,165)"/><rect x="18" y="5" width="5" height="5" fill="rgb(155,155,155)"/><rect x="23" y="5" width="5" height="5" fill="rgb(180,180,180)"/><rect x="28" y="5" width="5" height="5" fill="rgb(190,190,190)"/><rect x="33" y="5" width="5" height="5" fill="rgb(240,240,240)"/><rect x="38" y="5" width="5" height="5" fill="rgb(160,160,160)"/><rect x="43" y="5" width="5" height="5" fill="rgb(190,190,190)"/><rect x="48" y="5" width="5" height="5" fill="rgb(195,195,195)"/><rect x="53" y="5" width="5" height="5" fill="rgb(175,175,175)"/><rect x="58" y="5" width="5" height="5" fill="rgb(160,160,160)"/><rect x="73" y="5" width="5" height="5" fill="rgb(195,195,195)"/><rect x="78" y="5" width="5" height="5" fill="rgb(215,215,215)"/><rect x="83" y="5" width="5" height="5" fill="rgb(190,190,190)"/><rect x="88" y="5" width="5" height="5" fill="rgb(170,170,170)"/><rect x="93" y="5" width="5" height="5" fill="rgb(232,232,232)"/><rect x="98" y="5" width="5" height="5" fill="rgb(232,232,232)"/><rect x="108" y="5" width="5" height="5" fill="rgb(175,175,175)"/><rect x="113" y="5" width="5" height="5" fill="rgb(205,205,205)"/><rect x="118" y="5" width="5" height="5" fill="rgb(145,145,145)"/><rect x="123" y="5" width="5" height="5" fill="rgb(180,180,180)"/><rect x="128" y="5" width="5" height="5" fill="rgb(180,180,180)"/><rect x="133" y="5" width="5" height="5" fill="rgb(185,185,185)"/><rect x="138" y="5" width="5" height="5" fill="rgb(185,185,185)"/><rect x="143" y="5" width="5" height="5" fill="rgb(150,150,150)"/><rect x="148" y="5" width="5" height="5" fill="rgb(195,195,195)"/><rect x="153" y="5" width="5" height="5" fill="rgb(200,200,200)"/><rect x="158" y="5" width="5" height="5" fill="rgb(185,185,185)"/><rect x="163" y="5" width="5" height="5" fill="rgb(190,190,190)"/><rect x="168" y="5" width="5" height="5" fill="rgb(175,175,175)"/><rect x="173" y="5" width="5" height="5" fill="rgb(160,160,160)"/><rect x="183" y="5" width="5" height="5" fill="rgb(145,145,145)"/><rect x="188" y="5" width="5" height="5" fill="rgb(175,175,175)"/><rect x="193" y="5" width="5" height="5" fill="rgb(170,170,170)"/><rect x="198" y="5" width="5" height="5" fill="rgb(180,180,180)"/><rect x="203" y="5" width="5" height="5" fill="rgb(160,160,160)"/><rect x="208" y="5" width="5" height="5" fill="rgb(160,160,160)"/><rect x="213" y="5" width="5" height="5" fill="rgb(185,185,185)"/><rect x="218" y="5" width="5" height="5" fill="rgb(190,190,190)"/><rect x="223" y="5" width="5" height="5" fill="rgb(190,190,190)"/><rect x="228" y="5" width="5" height="5" fill="rgb(150,150,150)"/><rect x="233" y="5" width="5" height="5" fill="rgb(190,190,190)"/><rect x="238" y="5" width="5" height="5" fill="rgb(215,215,215)"/><rect x="243" y="5" width="5" height="5" fill="rgb(248,248,248)"/><rect x="248" y="5" width="5" height="5" fill="rgb(205,205,205)"/><rect x="253" y="5" width="5" height="5" fill="rgb(150,150,150)"/><rect x="258" y="5" width="5" height="5" fill="rgb(170,170,170)"/><rect x="263" y="5" width="5" height="5" fill="rgb(170,170,170)"/><rect x="268" y="5" width="5" height="5" fill="rgb(170,170,170)"/><rect x="273" y="5" width="5" height="5" fill="rgb(180,180,180)"/><rect x="278" y="5" width="5" height="5" fill="rgb(155,155,155)"/><rect x="283" y="5" width="5" height="5" fill="rgb(180,180,180)"/><rect x="288" y="5" width="5" height="5" fill="rgb(175,175,175)"/><rect x="293" y="5" width="5" height="5" fill="rgb(145,145,145)"/><rect x="298" y="5" width="5" height="5" fill="rgb(210,210,210)"/><rect x="303" y="5" width="5" height="5" fill="rgb(195,195,195)"/><rect x="308" y="5" width="5" height="5" fill="rgb(160,160,160)"/><rect x="313" y="5" width="5" height="5" fill="rgb(175,175,175)"/><rect x="318" y="5" width="5" height="5" fill="rgb(200,200,200)"/><rect x="323" y="5" width="5" height="5" fill="rgb(210,210,210)"/><rect x="0" y="10" width="3" height="5" fill="rgb(210,210,210)"/><rect x="3" y="10" width="5" height="5" fill="rgb(215,215,215)"/><rect x="8" y="10" width="5" height="5" fill="rgb(210,210,210)"/><rect x="13" y="10" width="5" height="5" fill="rgb(220,220,220)"/><rect x="18" y="10" width="5" height="5" fill="rgb(190,190,190)"/><rect x="23" y="10" width="5" height="5" fill="rgb(222,222,222)"/><rect x="28" y="10" width="5" height="5" fill="rgb(232,232,232)"/><rect x="33" y="10" width="5" height="5" fill="rgb(232,232,232)"/><rect x="38" y="10" width="5" height="5" fill="rgb(230,230,230)"/><rect x="43" y="10" width="5" height="5" fill="rgb(230,230,230)"/><rect x="48" y="10" width="5" height="5" fill="rgb(228,228,228)"/><rect x="53" y="10" width="5" height="5" fill="rgb(228,228,228)"/><rect x="58" y="10" width="5" height="5" fill="rgb(220,220,220)"/><rect x="63" y="10" width="5" height="5" fill="rgb(220,220,220)"/><rect x="73" y="10" width="5" height="5" fill="rgb(232,232,232)"/><rect x="78" y="10" width="5" height="5" fill="rgb(232,232,232)"/><rect x="83" y="10" width="5" height="5" fill="rgb(248,248,248)"/><rect x="88" y="10" width="5" height="5" fill="rgb(205,205,205)"/><rect x="93" y="10" width="5" height="5" fill="rgb(232,232,232)"/><rect x="98" y="10" width="5" height="5" fill="rgb(232,232,232)"/><rect x="103" y="10" width="5" height="5" fill="rgb(240,240,240)"/><rect x="108" y="10" width="5" height="5" fill="rgb(232,232,232)"/><rect x="113" y="10" width="5" height="5" fill="rgb(248,248,248)"/><rect x="118" y="10" width="5" height="5" fill="rgb(185,185,185)"/><rect x="123" y="10" width="5" height="5" fill="rgb(235,235,235)"/><rect x="128" y="10" width="5" height="5" fill="rgb(225,225,225)"/><rect x="133" y="10" width="5" height="5" fill="rgb(190,190,190)"/><rect x="138" y="10" width="5" height="5" fill="rgb(190,190,190)"/><rect x="143" y="10" width="5" height="5" fill="rgb(215,215,215)"/><rect x="148" y="10" width="5" height="5" fill="rgb(225,225,225)"/><rect x="153" y="10" width="5" height="5" fill="rgb(232,232,232)"/><rect x="158" y="10" width="5" height="5" fill="rgb(210,210,210)"/><rect x="163" y="10" width="5" height="5" fill="rgb(215,215,215)"/><rect x="168" y="10" width="5" height="5" fill="rgb(212,212,212)"/><rect x="173" y="10" width="5" height="5" fill="rgb(212,212,212)"/><rect x="178" y="10" width="5" height="5" fill="rgb(245,245,245)"/><rect x="183" y="10" width="5" height="5" fill="rgb(252,252,252)"/><rect x="188" y="10" width="5" height="5" fill="rgb(210,210,210)"/><rect x="193" y="10" width="5" height="5" fill="rgb(232,232,232)"/><rect x="198" y="10" width="5" height="5" fill="rgb(232,232,232)"/><rect x="203" y="10" width="5" height="5" fill="rgb(210,210,210)"/><rect x="208" y="10" width="5" height="5" fill="rgb(222,222,222)"/><rect x="213" y="10" width="5" height="5" fill="rgb(240,240,240)"/><rect x="218" y="10" width="5" height="5" fill="rgb(222,222,222)"/><rect x="223" y="10" width="5" height="5" fill="rgb(222,222,222)"/><rect x="228" y="10" width="5" height="5" fill="rgb(195,195,195)"/><rect x="233" y="10" width="5" height="5" fill="rgb(215,215,215)"/><rect x="238" y="10" width="5" height="5" fill="rgb(195,195,195)"/><rect x="248" y="10" width="5" height="5" fill="rgb(205,205,205)"/><rect x="253" y="10" width="5" height="5" fill="rgb(228,228,228)"/><rect x="258" y="10" width="5" height="5" fill="rgb(200,200,200)"/><rect x="263" y="10" width="5" height="5" fill="rgb(232,232,232)"/><rect x="268" y="10" width="5" height="5" fill="rgb(232,232,232)"/><rect x="273" y="10" width="5" height="5" fill="rgb(235,235,235)"/><rect x="278" y="10" width="5" height="5" fill="rgb(195,195,195)"/><rect x="283" y="10" width="5" height="5" fill="rgb(200,200,200)"/><rect x="288" y="10" width="5" height="5" fill="rgb(222,222,222)"/><rect x="293" y="10" width="5" height="5" fill="rgb(185,185,185)"/><rect x="298" y="10" width="5" height="5" fill="rgb(235,235,235)"/><rect x="303" y="10" width="5" height="5" fill="rgb(235,235,235)"/><rect x="308" y="10" width="5" height="5" fill="rgb(225,225,225)"/><rect x="313" y="10" width="5" height="5" fill="rgb(235,235,235)"/><rect x="318" y="10" width="5" height="5" fill="rgb(205,205,205)"/><rect x="323" y="10" width="5" height="5" fill="rgb(232,232,232)"/></svg>
<svg class="a" style="left:940.2px;top:439.6px" width="23" height="23" viewBox="0 0 24 24" fill="#111" color="#111"><g fill="none" stroke="currentColor" stroke-width="1.9" stroke-linejoin="round"><path d="M4.2 20.3l1.2-4.1A8.6 8.6 0 1 1 8.6 19.3z"/></g><path d="M9.1 7.3c.3 0 .6 0 .8.4l.9 2.1c.1.3 0 .5-.2.8l-.6.7c.8 1.5 2 2.6 3.5 3.3l.7-.8c.2-.2.5-.3.8-.2l2 .9c.3.2.4.5.3.8-.2 1.1-1.1 1.8-2.2 1.8-3.6-.3-7-3.6-7.3-7.3 0-1.2.6-2.1 1.3-2.5z"/></svg>
<svg class="a" style="left:966.6px;top:440.6px" width="20.8" height="20.8" viewBox="0 0 24 24" fill="#111"><path d="M6.54 5c.06.89.21 1.76.45 2.59l-1.2 1.2c-.41-1.2-.67-2.47-.76-3.79h1.51m9.86 12.02c.85.24 1.72.39 2.6.45v1.49c-1.32-.09-2.59-.35-3.8-.75l1.2-1.19M7.5 3H4c-.55 0-1 .45-1 1 0 9.39 7.61 17 17 17 .55 0 1-.45 1-1v-3.49c0-.55-.45-1-1-1-1.24 0-2.45-.2-3.57-.57-.1-.04-.21-.05-.31-.05-.26 0-.51.1-.71.29l-2.2 2.2c-2.83-1.45-5.15-3.76-6.59-6.59l2.2-2.2c.28-.28.36-.67.25-1.02C8.7 6.45 8.5 5.25 8.5 4c0-.55-.45-1-1-1z"/></svg>
<svg class="a" style="left:1818.2px;top:347.6px" width="23" height="23" viewBox="0 0 24 24" fill="#111" color="#111"><g fill="none" stroke="currentColor" stroke-width="1.9" stroke-linejoin="round"><path d="M4.2 20.3l1.2-4.1A8.6 8.6 0 1 1 8.6 19.3z"/></g><path d="M9.1 7.3c.3 0 .6 0 .8.4l.9 2.1c.1.3 0 .5-.2.8l-.6.7c.8 1.5 2 2.6 3.5 3.3l.7-.8c.2-.2.5-.3.8-.2l2 .9c.3.2.4.5.3.8-.2 1.1-1.1 1.8-2.2 1.8-3.6-.3-7-3.6-7.3-7.3 0-1.2.6-2.1 1.3-2.5z"/></svg>
<svg class="a" style="left:1844.6px;top:348.6px" width="20.8" height="20.8" viewBox="0 0 24 24" fill="#111"><path d="M6.54 5c.06.89.21 1.76.45 2.59l-1.2 1.2c-.41-1.2-.67-2.47-.76-3.79h1.51m9.86 12.02c.85.24 1.72.39 2.6.45v1.49c-1.32-.09-2.59-.35-3.8-.75l1.2-1.19M7.5 3H4c-.55 0-1 .45-1 1 0 9.39 7.61 17 17 17 .55 0 1-.45 1-1v-3.49c0-.55-.45-1-1-1-1.24 0-2.45-.2-3.57-.57-.1-.04-.21-.05-.31-.05-.26 0-.51.1-.71.29l-2.2 2.2c-2.83-1.45-5.15-3.76-6.59-6.59l2.2-2.2c.28-.28.36-.67.25-1.02C8.7 6.45 8.5 5.25 8.5 4c0-.55-.45-1-1-1z"/></svg>
<svg class="a" style="left:1404px;top:441px" width="21" height="21" viewBox="0 0 24 24" fill="#111" color="#111"><g fill="none" stroke="currentColor" stroke-width="2.2"><path d="M5.2 10.2A6.6 6.6 0 0 1 16.4 8"/><path d="M17 13.8A6.6 6.6 0 0 1 6 16.4"/><path d="M16 16l5.5 5.5"/></g><path d="M18.4 4.6v6.2h-6.2z"/><path d="M3.6 19.8v-6.2h6.2z"/></svg>
<div class="a card" style="left:272px;top:642px;width:1616px;height:126px"></div>
<div class="t" style="left:289.4px;top:664.20px;font-size:18px;line-height:18px;color:#111;font-weight:normal;letter-spacing:-0.2px;-webkit-text-stroke:0.6px #111;">Fase</div>
<div class="t" style="left:289.0px;top:691.10px;font-size:16px;line-height:16px;color:#4a4e53;font-weight:normal;letter-spacing:0.5px;-webkit-text-stroke:0.2px #4a4e53;">Fase do processo</div>
<div class="t" style="left:571.5px;top:663.90px;font-size:14px;line-height:14px;color:#171717;font-weight:normal;letter-spacing:0.14px;-webkit-text-stroke:0.4px #171717;">Rastreio</div>
<div class="a inp" style="left:572px;top:683px;width:642px;height:44px"></div>
<div class="t" style="left:1229.3px;top:663.90px;font-size:14px;line-height:14px;color:#171717;font-weight:normal;letter-spacing:0.3px;-webkit-text-stroke:0.4px #171717;">Fase</div>
<div class="a inp" style="left:1229px;top:683px;width:642px;height:44px"></div>
<div class="t" style="left:1238.7px;top:696.55px;font-size:15px;line-height:15px;color:#6b6f73;font-weight:normal;letter-spacing:-0.4px;">Selecione a fase</div>
<svg class="a" style="left:1843.5px;top:694px" width="24" height="24" viewBox="0 0 24 24" fill="#555"><path d="M7 10l5 5 5-5z"/></svg>
</div>
<div id="border"></div>
</body></html>
